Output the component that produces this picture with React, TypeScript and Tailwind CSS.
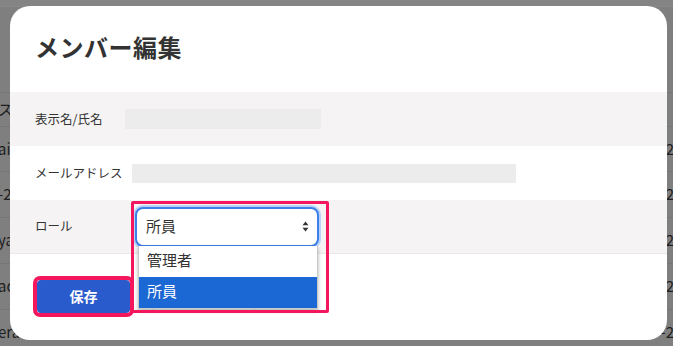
import React from "react";

const jp = { fontFamily: '"Noto Sans CJK JP", "Noto Sans", sans-serif' };

function BgRow({ left, right, h }: { left: string; right: string; h: string }) {
  return (
    <div className={`flex items-center justify-between border-b border-[#767676] ${h}`}>
      <span className="-ml-[2px] text-[15px] text-[#1e1e1e]">{left}</span>
      <span className="-mr-[1px] text-[15px] text-[#1e1e1e]">{right}</span>
    </div>
  );
}

export default function App() {
  return (
    <div className="relative h-[346px] w-[673px] overflow-hidden bg-[#7f7f7f]" style={jp}>
      {/* background table */}
      <div className="flex flex-col">
        <div className="h-[7px] border-b border-[#8a8a8a] bg-[#848484]" />
        <div className="h-[86px] border-b border-[#767676]" />
        <BgRow left="ス" right="" h="h-[34px]" />
        <BgRow left="ai_" right="-2" h="h-[45px]" />
        <BgRow left="-2" right="-2" h="h-[46px]" />
        <BgRow left="ya" right="-2" h="h-[46px]" />
        <BgRow left="ad" right="-2" h="h-[46px]" />
        <BgRow left="era" right="-2" h="h-[46px]" />
      </div>

      {/* modal */}
      <div className="absolute left-[10px] top-[6px] flex h-[334px] w-[657px] flex-col rounded-[20px] bg-white">
        <div className="flex h-[86px] items-center pb-[4px] pl-[25px]">
          <h1 className="text-[24px] font-bold tracking-[0.5px] text-[#333333]">メンバー編集</h1>
        </div>

        <div className="flex h-[54px] items-center bg-[#f5f3f4] pl-[25px]">
          <span className="w-[90px] text-[12.5px] text-[#333333]">表示名/氏名</span>
          <div className="h-[20px] w-[196px] bg-[#ececec]" />
        </div>
        <div className="flex h-[54px] items-center bg-white pl-[25px]">
          <span className="w-[97px] text-[12.5px] text-[#333333]">メールアドレス</span>
          <div className="h-[19px] w-[384px] bg-[#ececec]" />
        </div>
        <div className="flex h-[54px] items-center border-b border-[#e8e8e8] bg-[#f5f3f4] pl-[25px]">
          <span className="w-[100px] text-[12.5px] text-[#333333]">ロール</span>
          <div className="relative">
            <div className="flex h-[40px] w-[184px] items-center justify-between rounded-[8px] border-2 border-[#3d7fe8] bg-white pl-[9px] pr-[8px] shadow-[0_0_0_2px_#b9d2f7]">
              <span className="text-[15px] text-[#333333]">所員</span>
              <svg width="7" height="11" viewBox="0 0 7 11">
                <path d="M3.5 0.5 L6.5 4.3 H0.5 Z" fill="#333" />
                <path d="M3.5 10.5 L6.5 6.7 H0.5 Z" fill="#333" />
              </svg>
            </div>
          </div>
        </div>

        <div className="flex gap-[22px] pl-[27px] pt-[26px]">
          <div className="relative">
            <div className="absolute -inset-[4px] rounded-[7px] border-[4px] border-[#f4175e]" />
            <button className="flex h-[33px] w-[93px] items-center justify-center rounded-[4px] bg-[#2a5bcc] text-[14px] font-bold text-white">
              保存
            </button>
          </div>
          <button className="h-[33px] w-[103px] rounded-[6px] border border-[#e2e2e2] bg-white" />
        </div>

        {/* dropdown list overlay */}
        <div className="absolute left-[128px] top-[240px] flex w-[180px] flex-col border-x border-b border-[#c9c9c9] bg-white shadow-[0_2px_4px_rgba(0,0,0,0.3)]">
          <div className="flex h-[31px] items-center pb-[3px] pl-[8px] text-[15px] text-[#333333]">管理者</div>
          <div className="flex h-[31px] items-center bg-[#1b67d3] pb-[3px] pl-[8px] text-[15px] text-white">所員</div>
        </div>

        {/* annotation around the select */}
        <div className="absolute left-[121px] top-[195px] h-[112px] w-[198px] rounded-[2px] border-[3px] border-[#f4175e]" />
      </div>
    </div>
  );
}
